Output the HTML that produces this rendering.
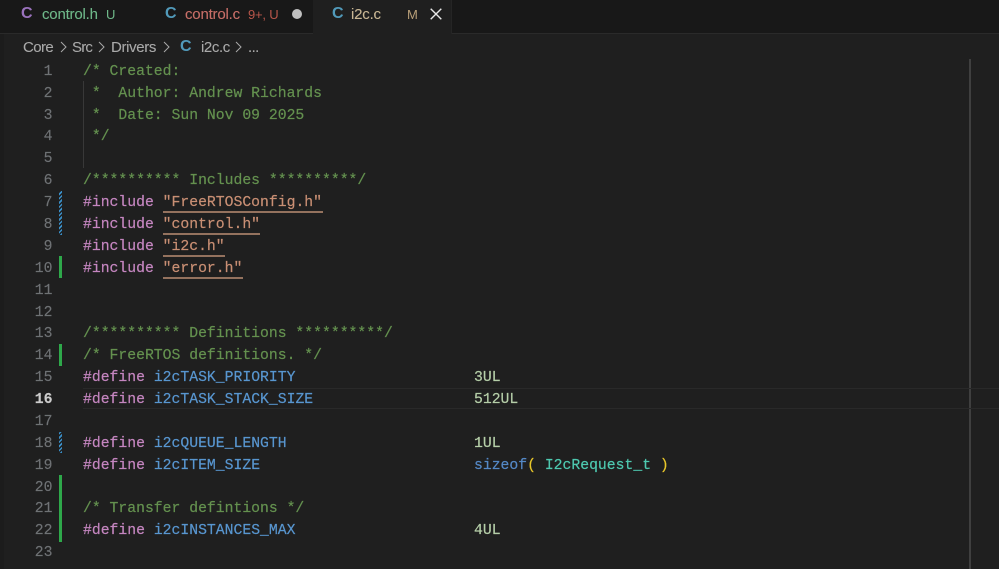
<!DOCTYPE html>
<html>
<head>
<meta charset="utf-8">
<style>
html,body{margin:0;padding:0;background:#1f1f1f;}
#r{position:relative;width:999px;height:569px;overflow:hidden;background:#1f1f1f;font-family:"Liberation Sans",sans-serif;}
.a{position:absolute;white-space:pre;}
.tabbar{position:absolute;left:0;top:0;width:999px;height:33px;background:#181818;border-bottom:1px solid #2a2a2a;}
.tab{position:absolute;top:0;height:33px;background:#181818;border-right:1px solid #252525;}
.u{font-size:15px;line-height:20px;top:5px;letter-spacing:-.2px;-webkit-text-stroke:.1px;}
.ci{font-weight:bold;font-size:16px;line-height:20px;top:4px;}
.bc{font-size:15px;line-height:20px;top:38px;color:#a9a9a9;-webkit-text-stroke:.1px;}
.ln{position:absolute;left:0;width:52.5px;text-align:right;font:14.75px/22px "Liberation Mono",monospace;color:#6f7275;-webkit-text-stroke:.15px;}
.c{position:absolute;left:83px;font:14.75px/22px "Liberation Mono",monospace;white-space:pre;color:#cccccc;-webkit-text-stroke:.2px;}
.g{color:#64914f}.k{color:#c586c0}.s{color:#c98f74;}.l{color:#b5cea8}.f{color:#5488c6}.t{color:#4ec9b0}.y{color:#e8c62a}
.d{color:#5896d0}
.ul{position:absolute;height:2px;background:#94725e;}
</style>
</head>
<body>
<div id="r">
<div class="a" style="left:0;top:0;width:4px;height:569px;background:#1c1c1c;"></div>
<div class="tabbar"></div>
<div class="tab" style="left:5px;width:143px;"></div>
<div class="tab" style="left:148px;width:165px;"></div>
<div class="tab" style="left:313px;width:138px;background:#1f1f1f;height:34px;"></div>

<div class="a ci" style="left:21px;color:#9a72bd;">C</div>
<div class="a u" style="left:42px;color:#6fb98a;">control.h</div>
<div class="a" style="left:106px;top:7px;font-size:13px;line-height:16px;color:#6fb98a;">U</div>

<div class="a ci" style="left:165px;color:#519aba;">C</div>
<div class="a u" style="left:185px;color:#c96f68;">control.c</div>
<div class="a" style="left:248px;top:7px;font-size:13px;line-height:16px;color:#b9564a;letter-spacing:-.2px;">9+, U</div>
<div class="a" style="left:292px;top:9px;width:10px;height:10px;border-radius:50%;background:#c0c0c0;"></div>

<div class="a ci" style="left:332px;color:#519aba;">C</div>
<div class="a u" style="left:351px;color:#c9b795;">i2c.c</div>
<div class="a" style="left:407px;top:7px;font-size:13px;line-height:16px;color:#b89f78;">M</div>
<svg class="a" style="left:430px;top:8px;" width="12" height="12" viewBox="0 0 12 12"><path d="M.7.7 11.3 11.3M11.3.7.7 11.3" stroke="#e8e8e8" stroke-width="1.4" fill="none"/></svg>

<div class="a bc" style="left:23px;letter-spacing:-.6px;">Core</div>
<svg class="a" style="left:60px;top:41px;" width="8" height="12" viewBox="0 0 8 12"><path d="M1 1l5 5-5 5" stroke="#a9a9a9" stroke-width="1" fill="none"/></svg>
<div class="a bc" style="left:72px;letter-spacing:-.8px;">Src</div>
<svg class="a" style="left:98px;top:41px;" width="8" height="12" viewBox="0 0 8 12"><path d="M1 1l5 5-5 5" stroke="#a9a9a9" stroke-width="1" fill="none"/></svg>
<div class="a bc" style="left:111px;letter-spacing:-.35px;">Drivers</div>
<svg class="a" style="left:163px;top:41px;" width="8" height="12" viewBox="0 0 8 12"><path d="M1 1l5 5-5 5" stroke="#a9a9a9" stroke-width="1" fill="none"/></svg>
<div class="a" style="left:180px;top:37px;font-weight:bold;font-size:16px;line-height:20px;color:#519aba;">C</div>
<div class="a bc" style="left:201px;letter-spacing:-.4px;">i2c.c</div>
<svg class="a" style="left:235px;top:41px;" width="8" height="12" viewBox="0 0 8 12"><path d="M1 1l5 5-5 5" stroke="#a9a9a9" stroke-width="1" fill="none"/></svg>
<div class="a bc" style="left:248px;letter-spacing:-.6px;">...</div>

<!-- indent guide -->
<div class="a" style="left:83px;top:81px;width:1px;height:87px;background:#383838;"></div>
<!-- ruler line -->
<div class="a" style="left:969px;top:59px;width:2px;height:510px;background:#3f3f3f;"></div>
<!-- current line -->
<div class="a" style="left:83px;top:388px;width:916px;height:19px;border-top:1px solid #292929;border-bottom:1px solid #292929;"></div>

<!-- git gutters -->
<div class="a" style="left:59px;top:191px;width:3px;height:44px;background:repeating-linear-gradient(-45deg,#3a8fc8 0 1.5px,#1f1f1f 1.5px 3px);"></div>
<div class="a" style="left:59px;top:256px;width:3px;height:22px;background:#2ea84a;"></div>
<div class="a" style="left:59px;top:344px;width:3px;height:22px;background:#2ea84a;"></div>
<div class="a" style="left:59px;top:432px;width:3px;height:21px;background:repeating-linear-gradient(-45deg,#3a8fc8 0 1.5px,#1f1f1f 1.5px 3px);"></div>
<div class="a" style="left:59px;top:475px;width:3px;height:67px;background:#2ea84a;"></div>

<!-- line numbers -->
<div class="ln" style="top:61px">1</div>
<div class="ln" style="top:83px">2</div>
<div class="ln" style="top:105px">3</div>
<div class="ln" style="top:126px">4</div>
<div class="ln" style="top:148px">5</div>
<div class="ln" style="top:170px">6</div>
<div class="ln" style="top:192px">7</div>
<div class="ln" style="top:214px">8</div>
<div class="ln" style="top:236px">9</div>
<div class="ln" style="top:258px">10</div>
<div class="ln" style="top:280px">11</div>
<div class="ln" style="top:302px">12</div>
<div class="ln" style="top:323px">13</div>
<div class="ln" style="top:345px">14</div>
<div class="ln" style="top:367px">15</div>
<div class="ln" style="top:389px;color:#cccccc;font-weight:bold;">16</div>
<div class="ln" style="top:411px">17</div>
<div class="ln" style="top:433px">18</div>
<div class="ln" style="top:455px">19</div>
<div class="ln" style="top:477px">20</div>
<div class="ln" style="top:498px">21</div>
<div class="ln" style="top:520px">22</div>
<div class="ln" style="top:542px">23</div>

<!-- code -->
<div class="c g" style="top:61px">/* Created:</div>
<div class="c g" style="top:83px"> *  Author: Andrew Richards</div>
<div class="c g" style="top:105px"> *  Date: Sun Nov 09 2025</div>
<div class="c g" style="top:126px"> */</div>
<div class="c g" style="top:170px">/********** Includes **********/</div>
<div class="c" style="top:192px"><span class="k">#include</span> <span class="s">"FreeRTOSConfig.h"</span></div>
<div class="ul" style="left:163px;top:211px;width:160px;"></div>
<div class="c" style="top:214px"><span class="k">#include</span> <span class="s">"control.h"</span></div>
<div class="ul" style="left:163px;top:233px;width:97px;"></div>
<div class="c" style="top:236px"><span class="k">#include</span> <span class="s">"i2c.h"</span></div>
<div class="ul" style="left:163px;top:255px;width:62px;"></div>
<div class="c" style="top:258px"><span class="k">#include</span> <span class="s">"error.h"</span></div>
<div class="ul" style="left:163px;top:277px;width:80px;"></div>
<div class="c g" style="top:323px">/********** Definitions **********/</div>
<div class="c g" style="top:345px">/* FreeRTOS definitions. */</div>
<div class="c" style="top:367px"><span class="k">#define</span> <span class="d">i2cTASK_PRIORITY</span></div>
<div class="c l" style="top:367px;left:474px">3UL</div>
<div class="c" style="top:389px"><span class="k">#define</span> <span class="d">i2cTASK_STACK_SIZE</span></div>
<div class="c l" style="top:389px;left:474px">512UL</div>
<div class="c" style="top:433px"><span class="k">#define</span> <span class="d">i2cQUEUE_LENGTH</span></div>
<div class="c l" style="top:433px;left:474px">1UL</div>
<div class="c" style="top:455px"><span class="k">#define</span> <span class="d">i2cITEM_SIZE</span></div>
<div class="c" style="top:455px;left:474px"><span class="f">sizeof</span><span class="y">(</span> <span class="t">I2cRequest_t</span> <span class="y">)</span></div>
<div class="c g" style="top:498px">/* Transfer defintions */</div>
<div class="c" style="top:520px"><span class="k">#define</span> <span class="d">i2cINSTANCES_MAX</span></div>
<div class="c l" style="top:520px;left:474px">4UL</div>
</div>
</body>
</html>
